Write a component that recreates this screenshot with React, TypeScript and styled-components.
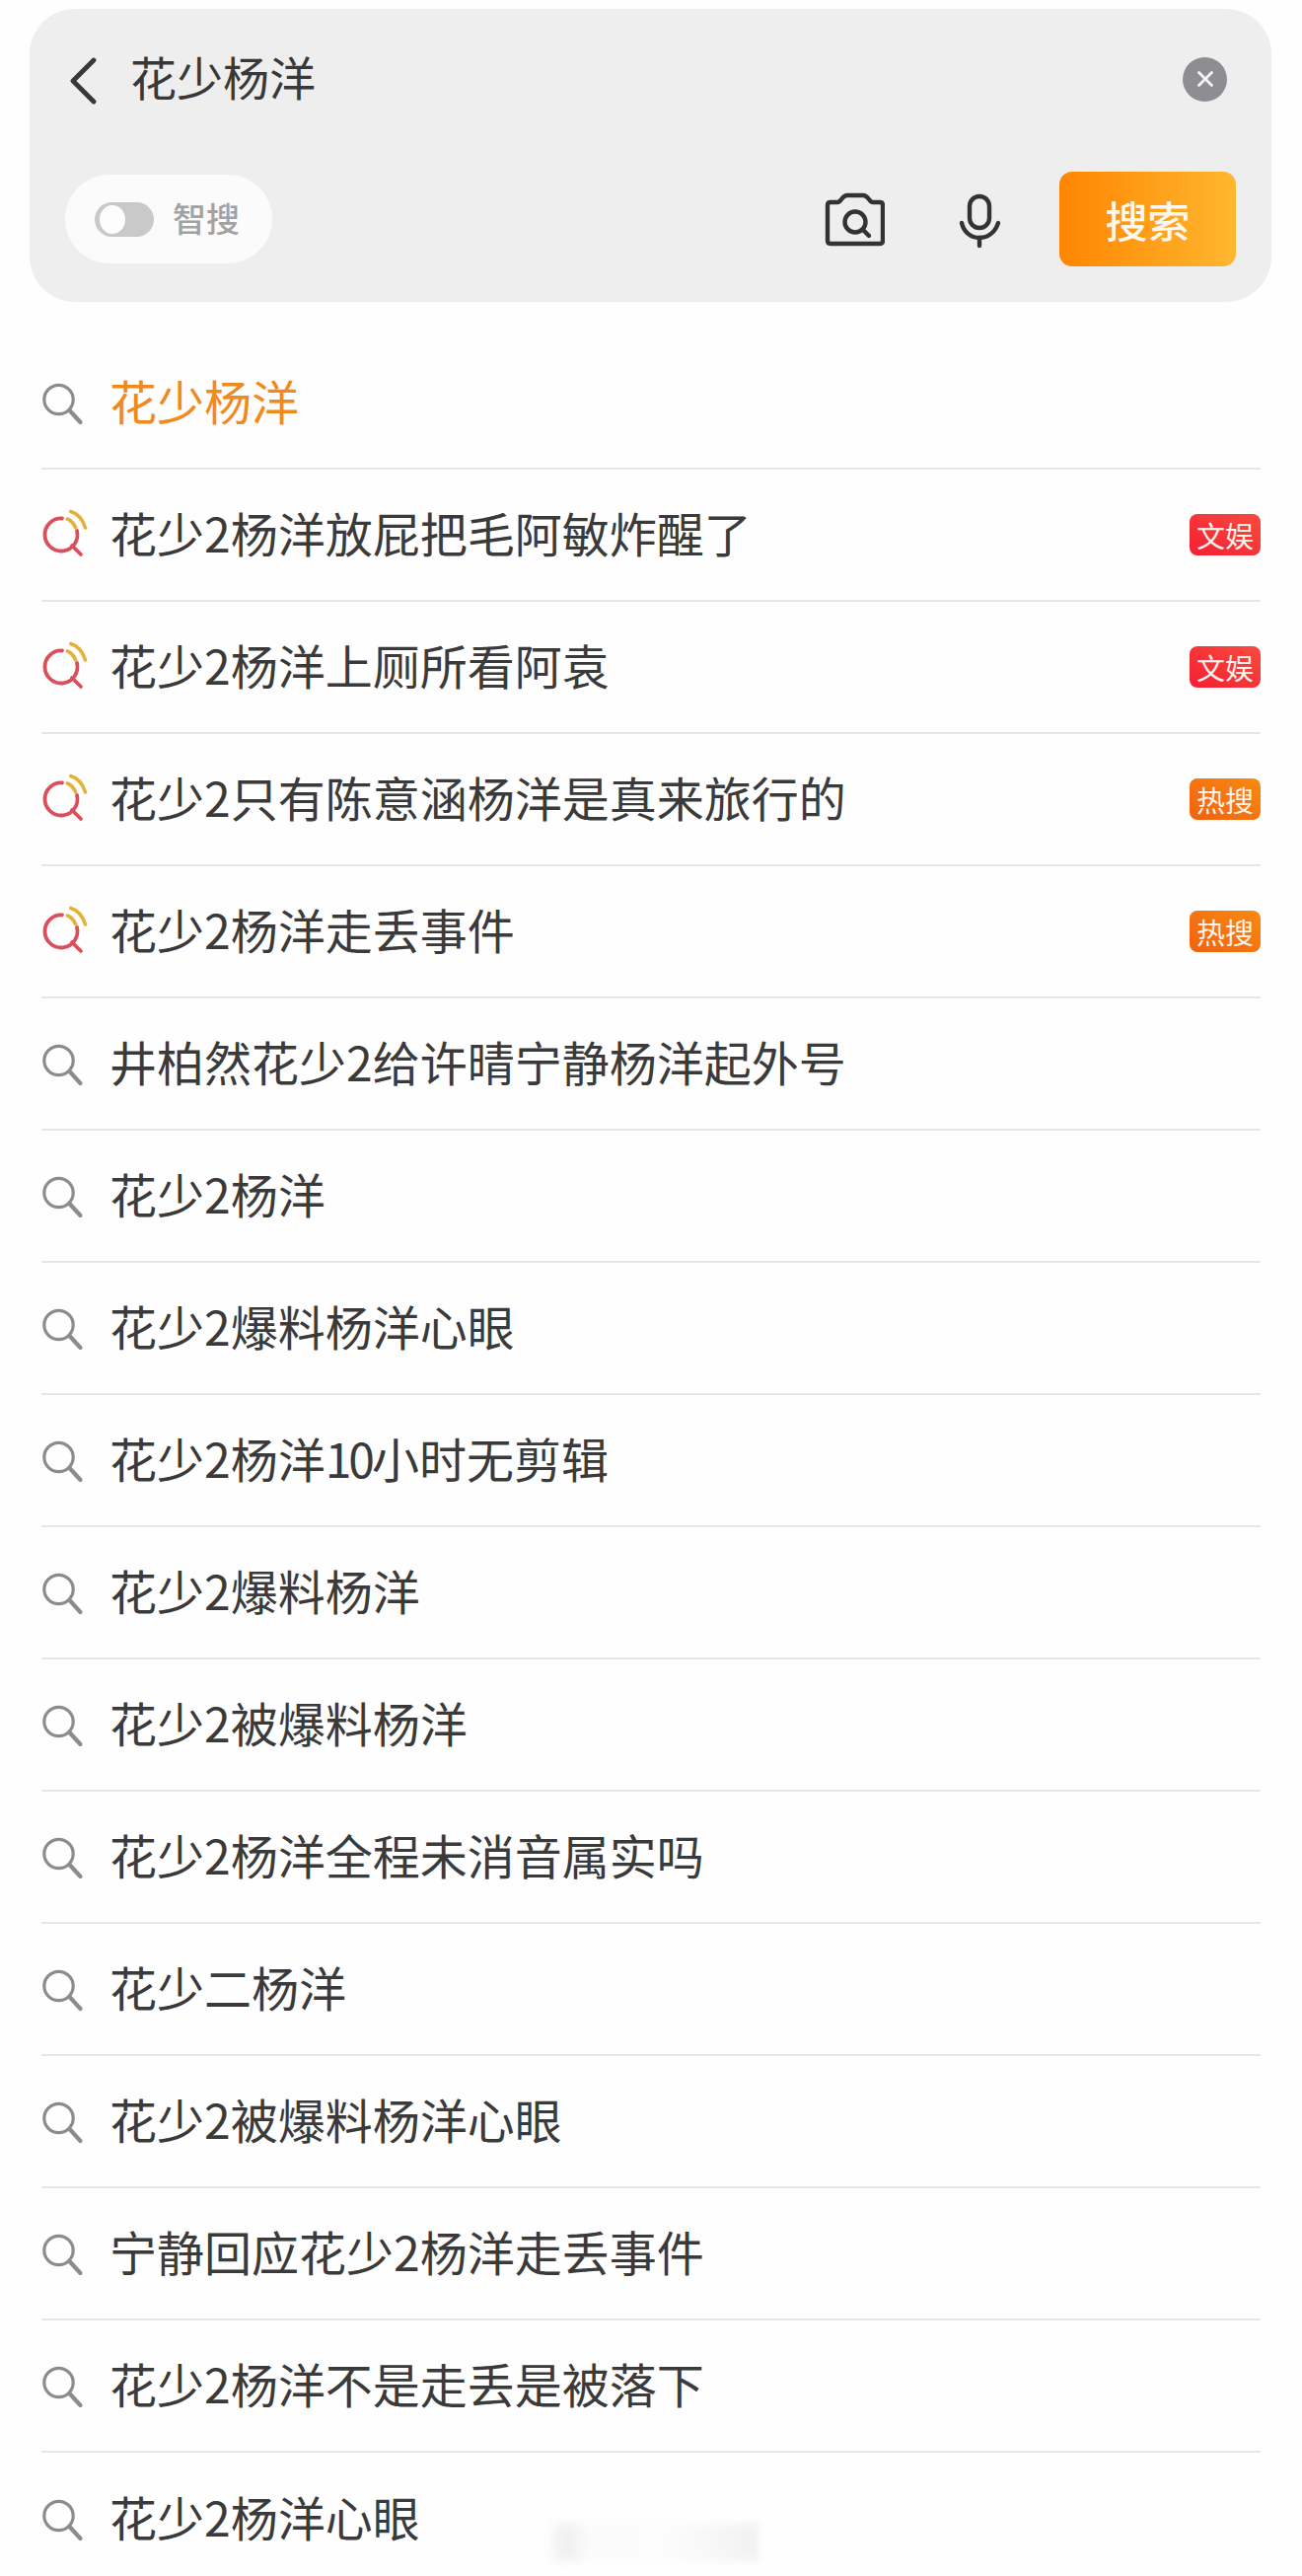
import React from 'react';
import styled, { createGlobalStyle } from 'styled-components';

const font = '"Noto Sans CJK SC", "Noto Sans", sans-serif';

type Tag = 'ent' | 'hot';
type Item = { text: string; tag?: Tag; trending?: boolean; active?: boolean };

const items: Item[] = [
  { text: '花少杨洋', active: true },
  { text: '花少2杨洋放屁把毛阿敏炸醒了', tag: 'ent', trending: true },
  { text: '花少2杨洋上厕所看阿袁', tag: 'ent', trending: true },
  { text: '花少2只有陈意涵杨洋是真来旅行的', tag: 'hot', trending: true },
  { text: '花少2杨洋走丢事件', tag: 'hot', trending: true },
  { text: '井柏然花少2给许晴宁静杨洋起外号' },
  { text: '花少2杨洋' },
  { text: '花少2爆料杨洋心眼' },
  { text: '花少2杨洋10小时无剪辑' },
  { text: '花少2爆料杨洋' },
  { text: '花少2被爆料杨洋' },
  { text: '花少2杨洋全程未消音属实吗' },
  { text: '花少二杨洋' },
  { text: '花少2被爆料杨洋心眼' },
  { text: '宁静回应花少2杨洋走丢事件' },
  { text: '花少2杨洋不是走丢是被落下' },
  { text: '花少2杨洋心眼' },
];

const GlobalStyle = createGlobalStyle`
  html, body {
    margin: 0;
    padding: 0;
    background: #fefefe;
  }
`;

const Page = styled.div`
  position: relative;
  width: 1320px;
  height: 2611px;
  overflow: hidden;
  background: #fefefe;
  font-family: ${font};
`;

const SearchCard = styled.div`
  box-sizing: border-box;
  width: 1259px;
  height: 297px;
  margin: 9px 0 0 30px;
  padding: 46px 36px 36px;
  background: #eeeeee;
  border-radius: 46px;
  display: flex;
  flex-direction: column;
  justify-content: space-between;
`;

const InputRow = styled.div`
  display: flex;
  align-items: center;
  height: 50px;
  padding: 0 9px 0 3px;
`;

const BackIcon = styled.svg`
  width: 30px;
  height: 48px;
  flex: none;
  margin-top: 4px;
`;

const Query = styled.div`
  flex: 1;
  margin: 0 0 6px 33px;
  font-size: 47px;
  line-height: 50px;
  color: #383838;
`;

const ClearButton = styled.div`
  width: 45px;
  height: 45px;
  border-radius: 50%;
  background: #8e8e92;
  display: flex;
  align-items: center;
  justify-content: center;
`;

const ToolRow = styled.div`
  display: flex;
  align-items: center;
`;

const SmartPill = styled.div`
  box-sizing: border-box;
  width: 210px;
  height: 90px;
  padding-left: 30px;
  border-radius: 45px;
  background: #fbfbfb;
  display: flex;
  align-items: center;
  gap: 19px;
`;

const Toggle = styled.div`
  width: 60px;
  height: 35px;
  border-radius: 18px;
  background: #c9c9c9;
  padding: 3px 0 3px 5px;
  box-sizing: border-box;
`;

const Knob = styled.div`
  width: 26px;
  height: 29px;
  border-radius: 50%;
  background: #fdfdfd;
`;

const SmartLabel = styled.span`
  font-size: 34px;
  line-height: 40px;
  font-weight: 500;
  color: #a2a2a2;
  margin-bottom: 2px;
`;

const CameraIcon = styled.svg`
  width: 62px;
  height: 57px;
  margin-left: auto;
  margin-top: 3px;
`;

const MicIcon = styled.svg`
  width: 46px;
  height: 56px;
  margin-left: 73px;
  margin-top: 3px;
`;

const SubmitButton = styled.div`
  width: 179px;
  height: 96px;
  margin-left: 58px;
  border-radius: 13px;
  background: linear-gradient(90deg, #ff8502 0%, #ffb72f 100%);
  color: #fdf8ee;
  font-size: 43px;
  font-weight: 500;
  display: flex;
  align-items: center;
  justify-content: center;
`;

const List = styled.div`
  margin: 36px 42px 0;
`;

const Row = styled.div`
  box-sizing: border-box;
  height: 134px;
  display: flex;
  align-items: center;
  border-bottom: 2px solid #e6e6e6;

  &:last-child {
    border-bottom: none;
  }
`;

const RowIcon = styled.svg`
  width: 46px;
  height: 50px;
  flex: none;
  overflow: visible;
`;

const RowText = styled.div<{ $active?: boolean }>`
  flex: 1;
  margin: 0 0 6px 23px;
  font-size: 48px;
  line-height: 60px;
  color: ${({ $active }) => ($active ? '#ef8a1e' : '#3a3a3a')};
`;

const TightDigits = styled.span`
  letter-spacing: -3px;
`;

const Badge = styled.div<{ $tag: Tag }>`
  width: 72px;
  height: 42px;
  border-radius: 8px;
  display: flex;
  align-items: center;
  justify-content: center;
  font-size: 29px;
  line-height: 42px;
  color: #fdf1ea;
  background: ${({ $tag }) =>
    $tag === 'ent'
      ? 'linear-gradient(30deg, #f41f33 0%, #f84b3e 100%)'
      : 'linear-gradient(30deg, #f0610f 0%, #f98a12 100%)'};
`;

// smudged-out watermark at the bottom of the shot
const Watermark = styled.div`
  position: absolute;
  left: 555px;
  top: 2558px;
  width: 214px;
  height: 38px;
  background: linear-gradient(
    90deg,
    #fefefe 0%,
    #f0f0f0 7%,
    #f3f3f3 14%,
    #fbfbfb 18%,
    #fcfcfc 55%,
    #f8f8f8 75%,
    #f1f1f1 100%
  );
  filter: blur(4px);
`;

const SearchGlyph = () => (
  <RowIcon viewBox="0 0 46 50" fill="none" strokeLinecap="round">
    <circle cx="17.5" cy="22" r="14.7" stroke="#8c8c8c" strokeWidth="3.2" />
    <path d="M28.5 33 L39.5 45" stroke="#8c8c8c" strokeWidth="4.2" />
  </RowIcon>
);

const TrendingGlyph = () => (
  <RowIcon viewBox="0 0 46 50" fill="none" strokeLinecap="round">
    <path d="M21 8.5 A16.5 16.5 0 1 0 36 21" stroke="#d9505c" strokeWidth="3.8" />
    <path d="M31 36 L40 45" stroke="#d9505c" strokeWidth="3.8" />
    <path d="M26.3 9 C30 10.5 33 14 34.7 18" stroke="#e3b23c" strokeWidth="3.6" />
    <path d="M29.7 1.5 C37 3.5 42 10 44.5 18" stroke="#e3b23c" strokeWidth="3.6" />
  </RowIcon>
);

// the two-digit run sits tighter than the rest of the line in the shot
const renderText = (text: string) =>
  text.split(/(10)/).map((part, index) =>
    part === '10' ? <TightDigits key={index}>{part}</TightDigits> : part,
  );

export default function App() {
  return (
    <Page>
      <GlobalStyle />
      <SearchCard>
        <InputRow>
          <BackIcon viewBox="0 0 30 48" fill="none">
            <path d="M26 3 L5 24 L26 45" stroke="#383838" strokeWidth="4.8" strokeLinecap="round" strokeLinejoin="round" />
          </BackIcon>
          <Query>花少杨洋</Query>
          <ClearButton>
            <svg width="20" height="20" viewBox="0 0 20 20" fill="none">
              <path d="M3.5 3.5 L16.5 16.5 M16.5 3.5 L3.5 16.5" stroke="#f6f6f6" strokeWidth="2.8" strokeLinecap="round" />
            </svg>
          </ClearButton>
        </InputRow>
        <ToolRow>
          <SmartPill>
            <Toggle>
              <Knob />
            </Toggle>
            <SmartLabel>智搜</SmartLabel>
          </SmartPill>
          <CameraIcon viewBox="0 0 62 57" fill="none" stroke="#333333" strokeWidth="4.4" strokeLinejoin="round" strokeLinecap="round">
            <path d="M4 13 Q4 10 7 10 H14 Q16 10 18 7 Q21 3 24 3 H40 Q43 3 46 7 Q48 10 50 10 H57 Q60 10 60 13 V49 Q60 52 57 52 H7 Q4 52 4 49 Z" />
            <circle cx="32" cy="30" r="10.5" />
            <path d="M40 38 L46 44" />
          </CameraIcon>
          <MicIcon viewBox="0 0 46 56" fill="none" stroke="#333333" strokeWidth="4.4" strokeLinecap="round">
            <rect x="13" y="3" width="20" height="32" rx="10" />
            <path d="M5 30 C7 39 14 45 23 45 C32 45 39 39 42 30" />
            <path d="M23 45 V53" />
          </MicIcon>
          <SubmitButton>搜索</SubmitButton>
        </ToolRow>
      </SearchCard>
      <List>
        {items.map((item, index) => (
          <Row key={index}>
            {item.trending ? <TrendingGlyph /> : <SearchGlyph />}
            <RowText $active={item.active}>{renderText(item.text)}</RowText>
            {item.tag && <Badge $tag={item.tag}>{item.tag === 'ent' ? '文娱' : '热搜'}</Badge>}
          </Row>
        ))}
      </List>
      <Watermark />
    </Page>
  );
}
